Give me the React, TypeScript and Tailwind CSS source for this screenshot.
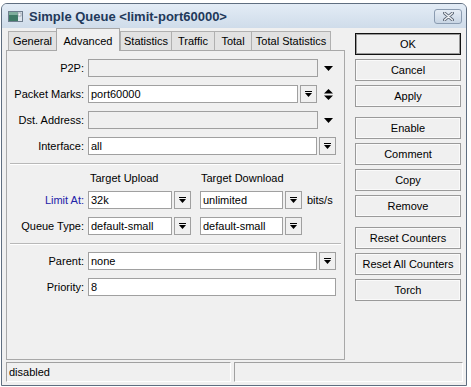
import React from "react";

const FONT = "font-['Liberation_Sans',Arial,sans-serif]";

function BarDown() {
  return (
    <svg width="7" height="7" viewBox="0 0 7 7">
      <rect x="0" y="0" width="7" height="1" fill="#000" />
      <path d="M0 2H7L3.5 6Z" fill="#000" />
    </svg>
  );
}

function DropBtn() {
  return (
    <div className="w-[17px] h-[18px] ml-[2px] border border-[#a0a0a0] bg-[#f0f0f0] flex items-center justify-center shrink-0">
      <BarDown />
    </div>
  );
}

function Field({ w, value, disabled }: { w: string; value?: string; disabled?: boolean }) {
  return (
    <div
      className={`${w} h-[18px] border border-[#a0a0a0] ${disabled ? "bg-[#f0f0f0]" : "bg-white"} pl-[2px] flex items-center text-[11px] text-black shrink-0 leading-none`}
    >
      {value}
    </div>
  );
}

function Label({ text, blue }: { text: string; blue?: boolean }) {
  return (
    <div className={`w-[77px] mr-[4px] text-right text-[11px] leading-none shrink-0 ${blue ? "text-[#2222a8]" : "text-black"}`}>
      {text}
    </div>
  );
}

function PlainArrow() {
  return (
    <div className="w-[20px] flex items-center justify-center">
      <svg width="9" height="5" viewBox="0 0 9 5">
        <path d="M0 0H9L4.5 5Z" fill="#000" />
      </svg>
    </div>
  );
}

function UpDown() {
  return (
    <div className="w-[22px] flex items-center justify-center">
      <svg width="9" height="11" viewBox="0 0 9 11">
        <path d="M4.5 0L9 4.5H0Z" fill="#000" />
        <path d="M0 6.5H9L4.5 11Z" fill="#000" />
      </svg>
    </div>
  );
}

function Sep() {
  return <div className="mx-[3px] h-[2px] border-t border-[#b8b8b8] border-b border-b-white" />;
}

function Btn({ label, def }: { label: string; def?: boolean }) {
  return (
    <div
      className={`h-[22px] w-full flex items-center justify-center text-[11px] text-black bg-[#f0f0f0] ${
        def
          ? "border border-[#111] shadow-[inset_0_0_0_1px_#9a9a9a]"
          : "border border-[#9a9a9a] shadow-[inset_0_0_0_1px_#fafafa]"
      }`}
    >
      {label}
    </div>
  );
}

function Tab({ label, w, active, last }: { label: string; w: string; active?: boolean; last?: boolean }) {
  if (active) {
    return (
      <div
        className={`${w} h-[23px] -mb-px relative z-10 bg-[#f0f0f0] border border-b-0 border-[#a8a8a8] flex items-start justify-center pt-[4px] text-[11px] text-black shrink-0`}
      >
        {label}
      </div>
    );
  }
  return (
    <div
      className={`${w} h-[19px] bg-[#e2e2e2] border-t border-l ${last ? "border-r" : ""} border-[#b0b0b0] flex items-center justify-center text-[11px] text-black shrink-0`}
    >
      {label}
    </div>
  );
}

export default function App() {
  return (
    <div className={`w-[471px] h-[387px] bg-white pt-[3px] pl-[1px] overflow-hidden ${FONT}`}>
      <div className="w-[466px] h-[383px] border border-[#5f6e80] rounded-t-[6px] flex flex-col overflow-hidden bg-[#d7e3f0]">
        {/* Title bar */}
        <div className="h-[24px] shrink-0 flex items-center bg-gradient-to-b from-[#e3ecf6] to-[#cfdcea] pl-[6px] pr-[4px]">
          <svg width="15" height="11" viewBox="0 0 15 11" className="shrink-0">
            <rect x="0.5" y="0.5" width="14" height="10" fill="#dfe6ee" stroke="#6f7e8e" />
            <rect x="1" y="1" width="9" height="9" fill="#3f7a66" />
            <rect x="1" y="1" width="9" height="3" fill="#7fae9d" />
            <rect x="10" y="2" width="3" height="3" fill="#ffffff" stroke="#7a8796" strokeWidth="0.6" />
          </svg>
          <div className="ml-[6px] text-[13px] font-bold text-[#22395a] leading-none">
            Simple Queue &lt;limit-port60000&gt;
          </div>
          <div className="flex-1" />
          <div className="w-[28px] h-[15px] mt-px rounded-[3px] border border-[#8a9bb0] bg-gradient-to-b from-[#e6edf5] to-[#c8d5e4] flex items-center justify-center">
            <svg width="11" height="9" viewBox="0 0 11 9">
              <path d="M1.5 1L9.5 8M9.5 1L1.5 8" stroke="#5b6675" strokeWidth="3" strokeLinecap="round" />
              <path d="M1.5 1L9.5 8M9.5 1L1.5 8" stroke="#f2f4f7" strokeWidth="1.3" strokeLinecap="round" />
            </svg>
          </div>
        </div>

        {/* Body */}
        <div className="flex-1 bg-[#f0f0f0] pl-[4px] flex flex-col">
          <div className="flex">
            {/* Left column */}
            <div className="w-[339px] flex flex-col">
              <div className="h-[22px] flex items-end pl-[2px]">
                <Tab label="General" w="w-[48px]" />
                <Tab label="Advanced" w="w-[64px]" active />
                <Tab label="Statistics" w="w-[51px]" />
                <Tab label="Traffic" w="w-[43px]" />
                <Tab label="Total" w="w-[37px]" />
                <Tab label="Total Statistics" w="w-[80px]" last />
              </div>
              <div className="h-[310px] border border-[#a8a8a8] bg-[#f0f0f0] pt-[8px] flex flex-col">
                <div className="flex items-center h-[18px]">
                  <Label text="P2P:" />
                  <Field w="w-[230px]" disabled />
                  <PlainArrow />
                </div>
                <div className="flex items-center h-[18px] mt-[8px]">
                  <Label text="Packet Marks:" />
                  <Field w="w-[210px]" value="port60000" />
                  <DropBtn />
                  <UpDown />
                </div>
                <div className="flex items-center h-[18px] mt-[8px]">
                  <Label text="Dst. Address:" />
                  <Field w="w-[230px]" disabled />
                  <PlainArrow />
                </div>
                <div className="flex items-center h-[18px] mt-[8px]">
                  <Label text="Interface:" />
                  <Field w="w-[229px]" value="all" />
                  <DropBtn />
                </div>
                <div className="mt-[8px]">
                  <Sep />
                </div>
                <div className="h-[26px] flex items-center text-[11px] text-black">
                  <div className="w-[81px]" />
                  <div className="w-[112px] pl-[2px]">Target Upload</div>
                  <div className="pl-[1px]">Target Download</div>
                </div>
                <div className="flex items-center h-[18px]">
                  <Label text="Limit At:" blue />
                  <Field w="w-[84px]" value="32k" />
                  <DropBtn />
                  <div className="w-[9px]" />
                  <Field w="w-[83px]" value="unlimited" />
                  <DropBtn />
                  <div className="ml-[5px] text-[11px] text-black">bits/s</div>
                </div>
                <div className="flex items-center h-[18px] mt-[8px]">
                  <Label text="Queue Type:" />
                  <Field w="w-[84px]" value="default-small" />
                  <DropBtn />
                  <div className="w-[9px]" />
                  <Field w="w-[83px]" value="default-small" />
                  <DropBtn />
                </div>
                <div className="mt-[8px]">
                  <Sep />
                </div>
                <div className="flex items-center h-[18px] mt-[7px]">
                  <Label text="Parent:" />
                  <Field w="w-[229px]" value="none" />
                  <DropBtn />
                </div>
                <div className="flex items-center h-[18px] mt-[8px]">
                  <Label text="Priority:" />
                  <Field w="w-[248px]" value="8" />
                </div>
              </div>
            </div>

            {/* Right column */}
            <div className="w-[106px] ml-[10px] mt-[5px] flex flex-col">
              <Btn label="OK" def />
              <div className="h-[4px]" />
              <Btn label="Cancel" />
              <div className="h-[4px]" />
              <Btn label="Apply" />
              <div className="h-[10px]" />
              <Btn label="Enable" />
              <div className="h-[4px]" />
              <Btn label="Comment" />
              <div className="h-[4px]" />
              <Btn label="Copy" />
              <div className="h-[4px]" />
              <Btn label="Remove" />
              <div className="h-[10px]" />
              <Btn label="Reset Counters" />
              <div className="h-[4px]" />
              <Btn label="Reset All Counters" />
              <div className="h-[4px]" />
              <Btn label="Torch" />
            </div>
          </div>

          {/* Status bar */}
          <div className="flex mt-[2px] h-[20px]">
            <div className="w-[225px] border-t border-l border-[#a0a0a0] border-b border-r border-b-white border-r-white flex items-center pl-[2px] text-[11px] text-black">
              disabled
            </div>
            <div className="w-[229px] ml-[3px] border-t border-l border-[#a0a0a0] border-b border-r border-b-white border-r-white" />
          </div>
        </div>
      </div>
    </div>
  );
}
